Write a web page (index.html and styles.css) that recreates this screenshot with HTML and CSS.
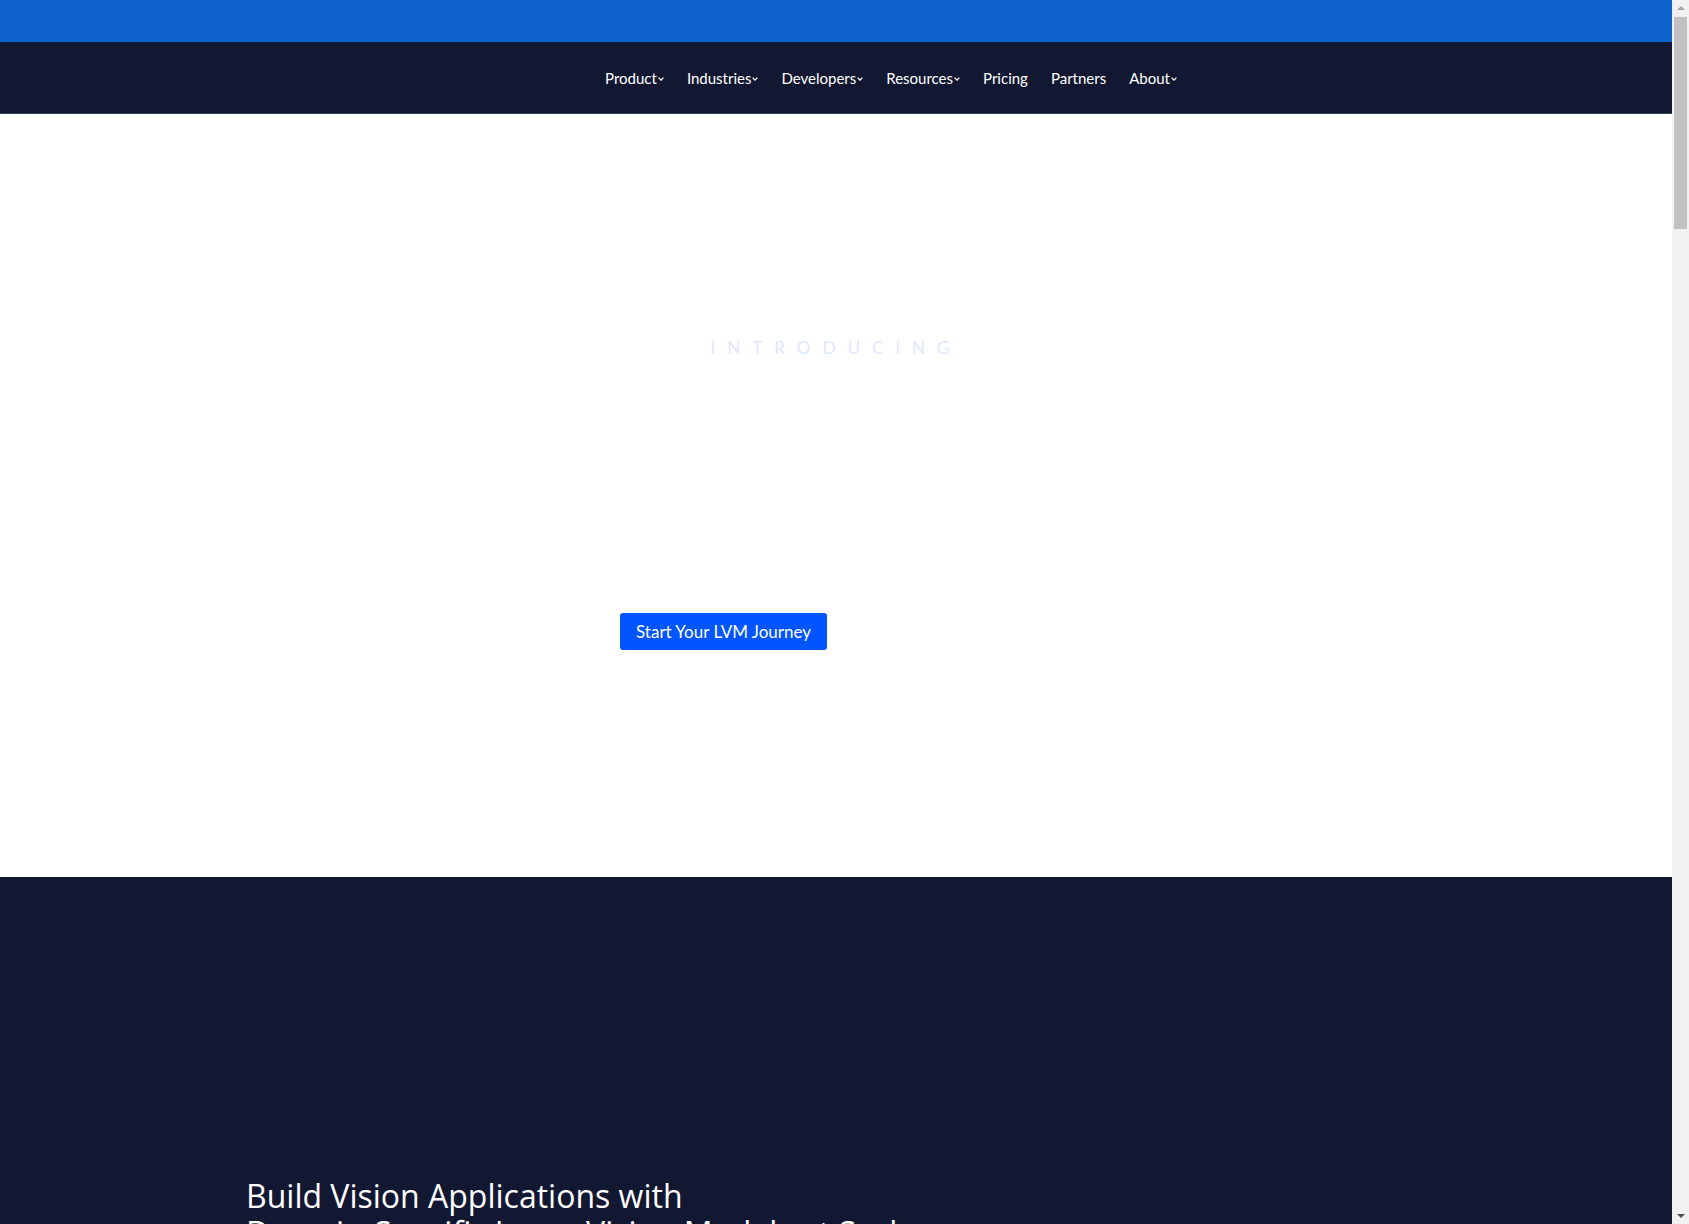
FILE: index.html
```html
<!DOCTYPE html>
<html lang="en">
	<head>
		<meta charset="utf-8" />
		<title>LandingAI</title>
		<link rel="stylesheet" href="styles.css">
	</head>

	<body>
		<div class="page">
			<div class="topbar"></div>

			<header class="nav">
				<ul class="nav-links">
					<li>Product<svg class="caret" viewBox="0 0 6 4"><path d="M0.6 0.6 L3 3.2 L5.4 0.6" /></svg></li>
					<li>Industries<svg class="caret" viewBox="0 0 6 4"><path d="M0.6 0.6 L3 3.2 L5.4 0.6" /></svg></li>
					<li>Developers<svg class="caret" viewBox="0 0 6 4"><path d="M0.6 0.6 L3 3.2 L5.4 0.6" /></svg></li>
					<li>Resources<svg class="caret" viewBox="0 0 6 4"><path d="M0.6 0.6 L3 3.2 L5.4 0.6" /></svg></li>
					<li>Pricing</li>
					<li>Partners</li>
					<li>About<svg class="caret" viewBox="0 0 6 4"><path d="M0.6 0.6 L3 3.2 L5.4 0.6" /></svg></li>
				</ul>
			</header>

			<section class="hero">
				<p class="eyebrow">INTRODUCING</p>
				<div class="container">
					<div class="hero-actions">
						<a class="btn" href="#">Start Your LVM Journey</a>
					</div>
				</div>
			</section>

			<section class="dark">
				<div class="container">
					<h2>Build Vision Applications with<br>Domain-Specific Large Vision Models at Scale</h2>
				</div>
			</section>
		</div>

		<!-- window scrollbar -->
		<div class="scrollbar">
			<div class="sb-btn"><span class="arrow-up"></span></div>
			<div class="sb-thumb"></div>
			<div class="sb-track"></div>
			<div class="sb-btn"><span class="arrow-down"></span></div>
		</div>
	</body>
</html>
```

FILE: styles.css
```css
html, body{
	margin: 0;
	height: 100%;
}

body{
	font-family: Lato, "Open Sans", sans-serif;
	background-color: #ffffff;
	display: flex;
	overflow: hidden;
}

.page{
	flex: 1;
	min-width: 0;
	height: 100vh;
	overflow: hidden;
}

.scrollbar{
	width: 17px;
	height: 100vh;
	background-color: #f1f1f1;
	display: flex;
	flex-direction: column;
}

.sb-btn{
	height: 17px;
	display: flex;
	align-items: center;
	justify-content: center;
}

.arrow-up{
	width: 0;
	height: 0;
	border-left: 4px solid transparent;
	border-right: 4px solid transparent;
	border-bottom: 4px solid #a3a3a3;
	margin-top: -1px;
}

.arrow-down{
	width: 0;
	height: 0;
	border-left: 4px solid transparent;
	border-right: 4px solid transparent;
	border-top: 4px solid #505050;
	margin-top: 1px;
}

.sb-thumb{
	height: 212px;
	margin: 0 2px;
	background-color: #c1c1c1;
}

.sb-track{
	flex: 1;
}

.topbar{
	height: 42px;
	background-color: #0d62cb;
}

.nav{
	height: 71px;
	background-color: #131832;
	border-bottom: 1px solid #33415c;
	display: flex;
	align-items: center;
	justify-content: center;
}

.nav-links{
	list-style: none;
	margin: 0;
	padding: 0 0 0 110px;
	display: flex;
	gap: 23px;
}

.nav-links li{
	color: #ffffff;
	font-size: 15px;
	display: flex;
	align-items: center;
}

.caret{
	width: 6px;
	height: 4px;
	margin-left: 1px;
	margin-top: 3px;
	fill: none;
	stroke: #ffffff;
	stroke-width: 1.2;
}

.container{
	width: 1180px;
	margin: 0 auto;
}

.hero{
	padding-top: 224px;
	padding-bottom: 227px;
}

.eyebrow{
	margin: 0 0 255px 0;
	text-align: center;
	font-size: 17px;
	line-height: 20px;
	letter-spacing: 12px;
	color: #dfe6ff;
}

.hero-actions{
	padding-left: 374px;
}

.btn{
	display: inline-block;
	background-color: #0055ff;
	color: #ffffff;
	font-size: 17px;
	line-height: 21px;
	padding: 8px 16px;
	border-radius: 3px;
	text-decoration: none;
}

.dark{
	background-color: #131832;
	padding-top: 300px;
	min-height: 5700px;
}

.dark h2{
	margin: 0;
	color: #ffffff;
	font-family: "Open Sans", Lato, sans-serif;
	font-weight: normal;
	font-size: 32px;
	line-height: 37px;
}
```
